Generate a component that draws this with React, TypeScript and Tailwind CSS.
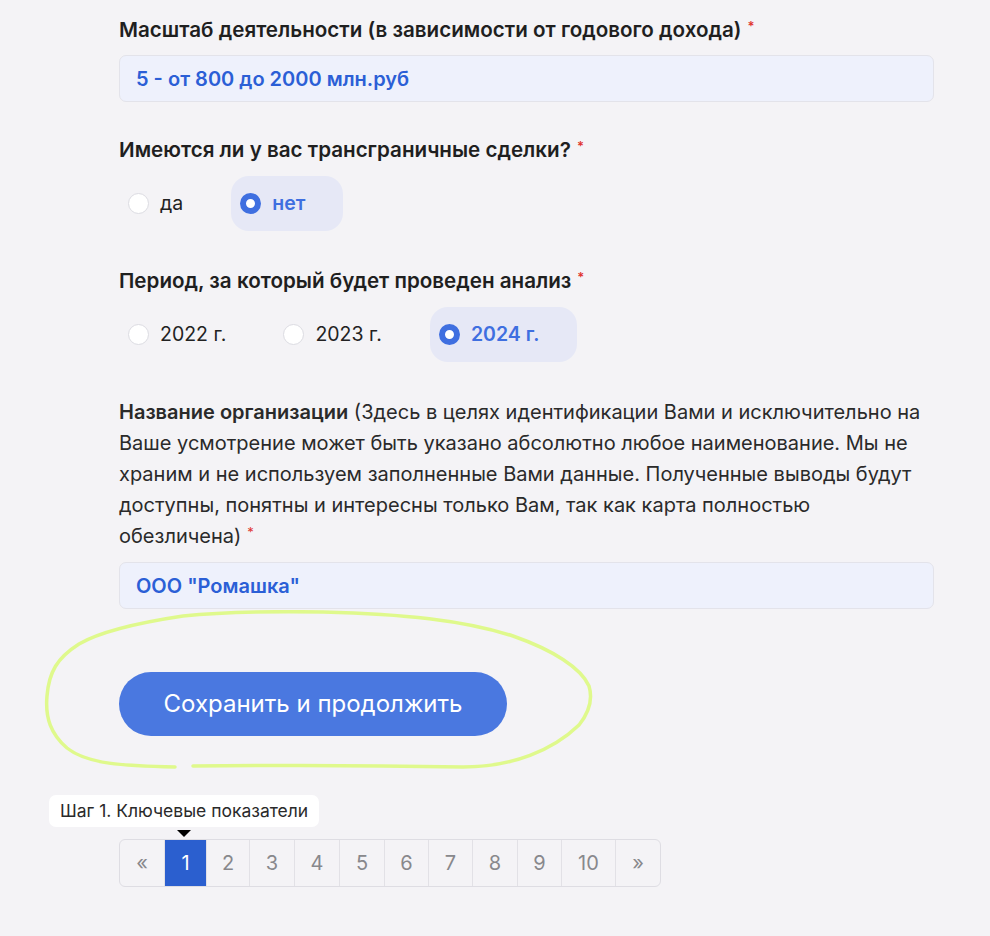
import { useState } from "react";

const Req = () => <sup className="text-[#e0342f] text-[13px] ml-[6px] relative -top-[6px]">*</sup>;

const Radio = ({ label, checked, onClick }: { label: string; checked: boolean; onClick: () => void }) => (
  <button
    onClick={onClick}
    className={`flex items-center gap-[11px] h-[55px] rounded-[18px] px-[9px] pr-[38px] ${
      checked ? "bg-[#e6e8f6] text-[#3f6fe0] font-semibold" : "text-[#222]"
    }`}
  >
    <span
      className={`w-[21px] h-[21px] rounded-full ${
        checked ? "border-[6px] border-[#3f6fe0] bg-white" : "border border-[#dcdce2] bg-white"
      }`}
    />
    <span className="text-[19.5px]">{label}</span>
  </button>
);

const Question = ({ title, children }: { title: string; children: React.ReactNode }) => (
  <div className="flex flex-col gap-[11px]">
    <div className="text-[20.6px] leading-[30px] font-semibold">
      {title}
      <Req />
    </div>
    {children}
  </div>
);

const Field = ({ value }: { value: string }) => (
  <div className="h-[47px] rounded-[7px] border border-[#e3e3ea] bg-[#eef1fc] flex items-center px-[16px] text-[20px] font-semibold text-[#2b5fd6]">
    {value}
  </div>
);

export default function App() {
  const [deals, setDeals] = useState("нет");
  const [period, setPeriod] = useState("2024 г.");
  const pages = [
    { p: "«", w: "w-[44px]" },
    { p: "1", w: "w-[42px]" },
    { p: "2", w: "w-[43px]" },
    { p: "3", w: "w-[45px]" },
    { p: "4", w: "w-[45px]" },
    { p: "5", w: "w-[45px]" },
    { p: "6", w: "w-[44px]" },
    { p: "7", w: "w-[44px]" },
    { p: "8", w: "w-[45px]" },
    { p: "9", w: "w-[44px]" },
    { p: "10", w: "w-[54px]" },
    { p: "»", w: "w-[45px]" },
  ];

  return (
    <div className="min-h-[936px] bg-[#f4f3f6] font-['Inter',sans-serif] text-[#1f1f1f]">
      <div className="pl-[119px] pt-[15px] w-[934px] flex flex-col">
        <div className="flex flex-col gap-[33px]">
          <Question title="Масштаб деятельности (в зависимости от годового дохода)">
            <div className="-mt-[1px]">
              <Field value="5 - от 800 до 2000 млн.руб" />
            </div>
          </Question>

          <Question title="Имеются ли у вас трансграничные сделки?">
            <div className="flex gap-[10px] mb-[2px]">
              {["да", "нет"].map((o) => (
                <Radio key={o} label={o} checked={deals === o} onClick={() => setDeals(o)} />
              ))}
            </div>
          </Question>

          <Question title="Период, за который будет проведен анализ">
            <div className="flex gap-[10px] mb-[2px]">
              {["2022 г.", "2023 г.", "2024 г."].map((o) => (
                <Radio key={o} label={o} checked={period === o} onClick={() => setPeriod(o)} />
              ))}
            </div>
          </Question>

          <div className="flex flex-col gap-[10px]">
            <div className="text-[20px] leading-[31px] text-[#2a2a2a]">
              <span className="font-semibold">Название организации</span> (Здесь в целях идентификации Вами и
              исключительно на Ваше усмотрение может быть указано абсолютно любое наименование. Мы не храним и не
              используем заполненные Вами данные. Полученные выводы будут доступны, понятны и интересны только
              Вам, так как карта полностью обезличена)
              <Req />
            </div>
            <Field value='ООО "Ромашка"' />
          </div>
        </div>

        {/* Save button with hand-drawn marker */}
        <div className="relative mt-[63px]">
          <svg
            className="absolute left-[-76px] top-[-62px] pointer-events-none"
            width="552"
            height="162"
            viewBox="0 0 552 162"
            fill="none"
          >
            <path
              d="M140 6 C100 12 60 20 36 34 C14 48 6 62 4 86 C2 108 8 124 24 138 C44 154 80 156 132 157
                 M150 156 C240 155 320 155 420 157 C470 157 510 140 536 115 C548 100 549 86 546 76
                 C538 58 510 40 470 26 C420 10 360 4 280 2 C220 1 180 2 140 6"
              stroke="#dff98c"
              strokeWidth="3.5"
              strokeLinecap="round"
            />
          </svg>
          <button className="relative h-[64px] w-[388px] rounded-full bg-[#4a78e0] text-white text-[24px] font-normal">
            Сохранить и продолжить
          </button>
        </div>

        {/* Pagination with tooltip */}
        <div className="relative mt-[103px] self-start">
          <div className="absolute left-[-70px] top-[-44px] h-[32px] flex items-center bg-white rounded-[7px] px-[11px] text-[17.5px] text-[#2a2a2a] whitespace-nowrap">
            Шаг 1. Ключевые показатели
          </div>
          <div className="absolute left-[58px] top-[-9px] w-0 h-0 border-l-[7px] border-r-[7px] border-t-[7px] border-l-transparent border-r-transparent border-t-black" />
          <div className="flex h-[48px] rounded-[6px] border border-[#dedde3] overflow-hidden">
            {pages.map(({ p, w }, i) => (
              <div
                key={p}
                className={`flex items-center justify-center text-[20px] ${w} ${
                  i === 0 ? "" : "border-l border-[#e2e1e6]"
                } ${p === "1" ? "bg-[#2b5fcf] text-white" : "text-[#88888c]"}`}
              >
                {p}
              </div>
            ))}
          </div>
        </div>
      </div>
    </div>
  );
}
